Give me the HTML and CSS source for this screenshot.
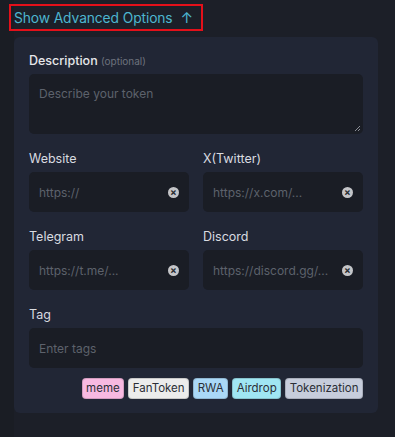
FILE: index.html
```html
<!DOCTYPE html>
<html lang="en">
<head>
    <meta charset="UTF-8">
    <meta name="viewport" content="width=device-width, initial-scale=1.0">
    <title>Advanced Options</title>
    <link rel="stylesheet" href="styles.css">
</head>
<body>
    <div class="page">
        <div class="toggle-row">
            <button class="toggle">Show Advanced Options <span class="arrow">&#8593;</span></button>
        </div>

        <div class="card">
            <div class="field">
                <label class="label label-strong">Description <span class="optional">(optional)</span></label>
                <div class="textarea">
                    <span class="placeholder">Describe your token</span>
                    <svg class="resize" width="7" height="7" viewBox="0 0 7 7">
                        <path d="M1 6L6 1M4 6L6 4" stroke="#8a8d94" stroke-width="1"/>
                    </svg>
                </div>
            </div>

            <div class="grid">
                <div class="field">
                    <label class="label">Website</label>
                    <div class="input">
                        <span class="placeholder">https://</span>
                        <span class="clear">&#215;</span>
                    </div>
                </div>
                <div class="field">
                    <label class="label">X(Twitter)</label>
                    <div class="input">
                        <span class="placeholder">https://x.com/...</span>
                        <span class="clear">&#215;</span>
                    </div>
                </div>
                <div class="field">
                    <label class="label">Telegram</label>
                    <div class="input">
                        <span class="placeholder">https://t.me/...</span>
                        <span class="clear">&#215;</span>
                    </div>
                </div>
                <div class="field">
                    <label class="label">Discord</label>
                    <div class="input">
                        <span class="placeholder">https://discord.gg/...</span>
                        <span class="clear">&#215;</span>
                    </div>
                </div>
            </div>

            <div class="field">
                <label class="label">Tag</label>
                <div class="input">
                    <span class="placeholder">Enter tags</span>
                </div>
            </div>

            <div class="tags">
                <span class="tag meme">meme</span>
                <span class="tag fantoken">FanToken</span>
                <span class="tag rwa">RWA</span>
                <span class="tag airdrop">Airdrop</span>
                <span class="tag tokenization">Tokenization</span>
            </div>
        </div>
    </div>
</body>
</html>
```

FILE: styles.css
```css
body {
    margin: 0;
    background-color: #1c1f27;
    font-family: 'Inter', 'Noto Sans', sans-serif;
    color: #e6e7ea;
}
.page {
    padding: 4px 17px 0 14px;
    height: 433px;
    background: linear-gradient(to right, #1a1d24 0, #1a1d24 14px, #1c1f28 14px);
}
.toggle-row {
    margin-left: -5px;
    margin-bottom: 6px;
}
.toggle {
    display: inline-flex;
    align-items: center;
    height: 27px;
    width: 194px;
    padding: 0 8px 0 3px;
    box-sizing: border-box;
    border: 2px solid #e3101a;
    background: none;
    color: #4db6cf;
    font-family: 'Inter', 'Noto Sans', sans-serif;
    font-size: 13.8px;
    font-weight: 400;
    letter-spacing: -0.1px;
    white-space: nowrap;
}
.arrow {
    margin-left: auto;
    font-size: 15px;
}
.card {
    background-color: #212635;
    border-radius: 6px;
    padding: 15px 15px 14px 15px;
}
.field {
    display: flex;
    flex-direction: column;
    gap: 4px;
    margin-bottom: 16px;
}
.label {
    font-size: 12.5px;
    line-height: 18px;
    font-weight: 400;
    color: #d9dbe0;
}
.label-strong {
    font-weight: 500;
    color: #e6e7ea;
}
.optional {
    font-size: 10px;
    font-weight: 400;
    color: #6d727d;
}
.textarea {
    position: relative;
    height: 60px;
    background-color: #1a1d25;
    border-radius: 5px;
    padding: 8px 10px;
    box-sizing: border-box;
}
.resize {
    position: absolute;
    right: 2px;
    bottom: 2px;
}
.placeholder {
    font-size: 12px;
    color: #5d626c;
}
.grid {
    display: grid;
    grid-template-columns: 1fr 1fr;
    column-gap: 14px;
}
.input {
    display: flex;
    align-items: center;
    justify-content: space-between;
    height: 40px;
    background-color: #1a1d25;
    border-radius: 5px;
    padding: 0 10px;
    box-sizing: border-box;
}
.clear {
    width: 11px;
    height: 11px;
    border-radius: 50%;
    background-color: #c4c5c8;
    color: #2a2d33;
    font-size: 10px;
    font-weight: 700;
    line-height: 11px;
    text-align: center;
}
.tags {
    display: flex;
    justify-content: flex-end;
    gap: 4px;
    margin-top: -6px;
}
.tag {
    font-size: 11.5px;
    line-height: 19px;
    padding: 0 3.5px;
    border-radius: 4px;
    border: 1px solid rgba(0,0,0,0.15);
    color: #2b2e36;
}
.meme { background-color: #f8b9e1; }
.fantoken { background-color: #ececec; }
.rwa { background-color: #aad8f7; }
.airdrop { background-color: #a0e6f3; }
.tokenization { background-color: #c7cddc; }
```
